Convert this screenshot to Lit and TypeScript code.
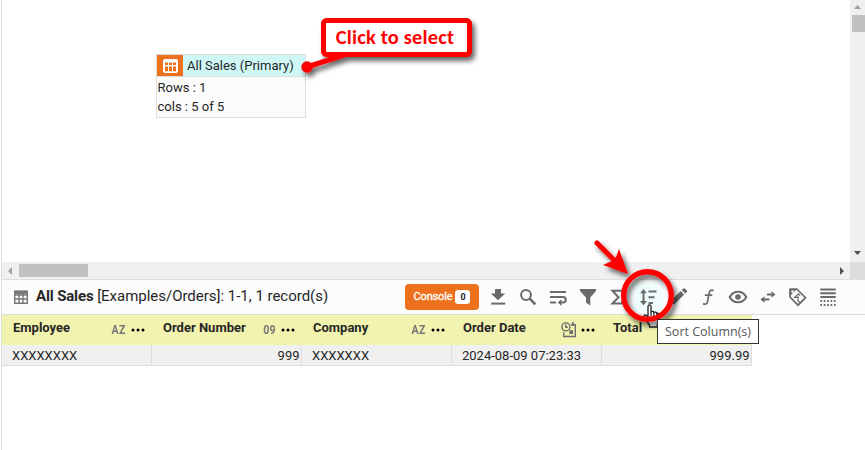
import { LitElement, html, svg, css, nothing } from "lit";
import { customElement } from "lit/decorators.js";
import { classMap } from "lit/directives/class-map.js";

const ICONS = [
  // download
  svg`<path d="M9 4h6v4.500h4.200L12 15.300 4.800 8.500H9z" fill="currentColor"/><path d="M5.200 17.600h14v2h-14z" fill="currentColor"/>`,
  // search
  svg`<circle cx="10" cy="10" r="4.900" class="line"/><path d="M13.700 13.700l5.600 5.600" class="line heavy"/>`,
  // wrap
  svg`<path d="M4 6.900h16M4 12h13a2.800 2.800 0 0 1 0 5.600h-3.500M4 17.600h6" class="line"/><path d="M15.500 14.300v6.600l-3.700-3.300z" fill="currentColor"/>`,
  // filter
  svg`<path d="M4 4h16v1.900L14.300 12.500V20.600L10 17.600V12.500L4 5.900z" fill="currentColor"/>`,
  // sum
  svg`<path d="M16 8V5.700H6.500l6 6.500-6 6.300H16V16" class="line"/>`,
  // sort
  svg`<path d="M7.500 6v12.500M12.500 6.500h8M12.500 12.300h6M12.500 17.900h4.500" class="line"/><path d="M4 8.300L7.500 4 11 8.300zM4 15.900L7.500 20.200l3.500-4.300z" fill="currentColor"/>`,
  // edit
  svg`<path d="M5 15.800L14.700 6.100l3.500 3.500L8.500 19.300H5zM15.700 5.100l1.700-1.700q.7-.5 1.300 0l2.200 2.200q.6.700 0 1.300l-1.700 1.700z" fill="currentColor"/>`,
  // function
  svg`<path d="M17.600 5.600c-2.300-1-3.800-.3-4.300 2L11.400 17c-.5 2.200-2 2.700-4.500 1.700M8.800 10.200h7.500" class="line thin"/>`,
  // view
  svg`<path d="M3.700 12C7.500 4.900 16.500 4.900 20.300 12 16.500 19.100 7.500 19.100 3.700 12z" class="line"/><circle cx="12" cy="12" r="2.800" fill="currentColor"/>`,
  // swap
  svg`<path d="M11 9.500h5M8 14.500h5.500" class="line"/><path d="M15.500 6.200l4 3.300-4 3.300zM8.500 11.200l-4 3.300 4 3.300z" fill="currentColor"/>`,
  // tag with sigma
  svg`<path d="M4 4.500q0-.5.500-.5h6.300l8.700 8.700-7.500 7.500L4 12z" class="line thin"/><path d="M3.500 4h7.500L4 11z" fill="currentColor"/><circle cx="6.600" cy="6.600" r="1.300" fill="#fcfcfc"/><path d="M14.600 11.700l-1.800-1.800-3.600 3.600 3.500-.3-.3 3.500 1.800 1.800" class="line hair" transform="translate(-.5 -1)"/>`,
  // rows
  svg`<path d="M4.300 4.500h15.500M4.300 8.200h15.500M4.300 12h15.500" class="line"/><path d="M4.300 16h15.500M4.300 20h15.500" class="line dots"/>`,
];

const COLUMNS = [
  { name: "Employee", kind: "AZ", value: "XXXXXXXX", right: false },
  { name: "Order Number", kind: "09", value: "999", right: true },
  { name: "Company", kind: "AZ", value: "XXXXXXX", right: false },
  { name: "Order Date", kind: "date", value: "2024-08-09 07:23:33", right: false },
  { name: "Total", kind: "", value: "999.99", right: true },
];

const dateIcon = svg`<g fill="none" stroke="#6e6e6e" stroke-width="1.400"><path d="M9.800 2.700h4.500v11.800H2.700V10.300"/><circle cx="4.900" cy="4.900" r="4"/><path d="M4.800 2.500v2.700h2"/></g><path d="M8.300 8.200h3.800v3.800H8.300zM11 0h1.700v4H11z" fill="#6e6e6e"/>`;

@customElement("app-root")
class AppRoot extends LitElement {
  static styles = css`
    :host { display: block; position: relative; width: 865px; height: 450px; overflow: hidden; background: #fff; color: #262626; font: 13px/19px Roboto, sans-serif; }
    * { box-sizing: border-box; }
    svg { display: block; flex: none; }
    .page { height: 450px; margin-left: 1px; border-left: 1px solid #ddd; display: flex; flex-direction: column; }
    .top { display: grid; grid-template: 262px 17px / 1fr 15px; border-bottom: 1px solid #ddd; height: 280px; flex: none; }
    .canvas { position: relative; overflow: hidden; }
    .card { position: absolute; left: 154px; top: 54px; width: 150px; height: 64px; border: 1px solid #ddd; background: #fcfcfc; }
    .cardhead { display: flex; align-items: center; height: 22px; background: #cff7f6; border-bottom: 1px solid #ddd; }
    .badge { width: 26px; height: 21px; background: #ed711c; margin-right: 4px; display: grid; place-items: center; }
    .info { padding: 1px 0 0 .5px; }
    .vbar { background: #f0f0f0; display: flex; flex-direction: column; align-items: center; padding: 5px 0 6px; }
    .vthumb { width: 13px; height: 17px; background: #c1c1c1; margin: 5px 0 auto 2px; }
    .hbar { background: #f0f0f0; display: flex; align-items: center; padding: 0 6px; }
    .hthumb { width: 69px; height: 13px; background: #c1c1c1; margin: 0 auto 0 7px; }
    .corner { background: #dcdcdc; }
    .toolbar { height: 35px; flex: none; display: flex; align-items: center; background: #fcfcfc; border-bottom: 1px solid #ddd; padding: 0 22px 1px 12px; }
    .title { font-size: 15px; letter-spacing: -.02px; margin-left: 8px; margin-right: auto; white-space: nowrap; }
    b { font-weight: 700; letter-spacing: -.15px; }
    .console { width: 74px; height: 26px; border-radius: 4px; background: #ed711c; color: #fff; font-size: 11px; letter-spacing: -.15px; -webkit-text-stroke: .3px #fff; display: flex; align-items: center; justify-content: center; gap: 3px; margin-right: 4px; }
    .count { width: 15px; height: 14px; border-radius: 3px; background: #fff; color: #222; font: 700 9px/14px Roboto, sans-serif; text-align: center; -webkit-text-stroke: 0; }
    .tool { width: 30px; height: 28px; display: grid; place-items: center; color: #6a6a6a; }
    .tool.on { background: #effcfc; }
    .line { fill: none; stroke: currentColor; stroke-width: 2; }
    .heavy { stroke-width: 2.600; }
    .thin { stroke-width: 1.700; }
    .hair { stroke-width: 1.200; }
    .dots { stroke-dasharray: 1.700 1.700; }
    .grid { display: grid; grid-template: 30px 21px / repeat(5, 150px); width: 750px; }
    .head { background: #f2f3ae; font-weight: 700; display: flex; align-items: center; padding: 0 7px 5px 11px; }
    .head .name { margin-right: auto; }
    .kind { color: #777; font: 700 12.500px/14px Roboto, sans-serif; letter-spacing: .3px; transform: scaleX(.85); transform-origin: right; margin-right: 5px; padding-top: 4px; }
    .date { margin-right: 4px; margin-top: 4px; }
    .more { margin-top: 4px; }
    .cell { background: #f0f0f0; border: solid #ddd; border-width: 0 1px 1px 0; line-height: 21px; padding: 0 1.500px 0 10px; white-space: nowrap; }
    .cell.right { text-align: right; }
    .marks { position: absolute; left: 0; top: 0; }
    .callout { position: absolute; left: 321px; top: 18px; width: 151px; height: 39px; border: 5px solid #f00; border-radius: 6px; background: #fff; color: #f00; font: 700 20.500px/29px Carlito, "Open Sans", sans-serif; letter-spacing: .15px; padding-right: 3px; text-align: center; white-space: nowrap; }
    .tip { position: absolute; left: 657px; top: 319px; width: 102px; height: 25px; border: 1px solid #333; background: #fff; color: #575757; font: 12.500px/23px "Open Sans", sans-serif; text-align: center; white-space: nowrap; }
  `;

  render() {
    return html`
      <div class="page">
        <div class="top">
          <div class="canvas">
            <div class="card">
              <div class="cardhead">
                <span class="badge"><svg width="15" height="14" viewBox="0 0 15 14"><rect width="15" height="14" rx="2" fill="#fff"/><path d="M2 3.500h3V6H2zM6 3.500h3V6H6zM10 3.500h3V6h-3zM2 7.500h3v4.800H2zM6 7.500h3v4.800H6zM10 7.500h3v4.800h-3z" fill="#ed711c"/></svg></span>
                All Sales (Primary)
              </div>
              <div class="info">Rows : 1<br />cols : 5 of 5</div>
            </div>
          </div>
          <div class="vbar">
            <svg width="7" height="5"><path d="M0 4L3.500 0 7 4z" fill="#a0a0a0"/></svg>
            <div class="vthumb"></div>
            <svg width="7" height="5"><path d="M0 0h7L3.500 4z" fill="#505050"/></svg>
          </div>
          <div class="hbar">
            <svg width="4" height="8"><path d="M4 0v8L0 4z" fill="#a0a0a0"/></svg>
            <div class="hthumb"></div>
            <svg width="4" height="8"><path d="M0 0l4 4-4 4z" fill="#505050"/></svg>
          </div>
          <div class="corner"></div>
        </div>
        <div class="toolbar">
          <svg width="14" height="14" viewBox="0 0 14 14"><path d="M.7 1.500h12.600v11.800H.7zM.7 5h12.600M.7 9h12.600M5 4v9M9 4v9" fill="none" stroke="#777" stroke-width="1.400"/><path d="M0 .5h14V4H0z" fill="#777"/></svg>
          <div class="title"><b>All Sales</b> [Examples/Orders]: 1-1, 1 record(s)</div>
          <div class="console">Console<span class="count">0</span></div>
          ${ICONS.map((icon, i) => html`<span class=${classMap({ tool: true, on: i === 5 })}><svg width="22" height="22" viewBox="1 1 22 22">${icon}</svg></span>`)}
        </div>
        <div class="grid">
          ${COLUMNS.map((c) => html`<div class="head"><span class="name">${c.name}</span>
            ${c.kind === "date"
              ? html`<svg class="date" width="16" height="16">${dateIcon}</svg>`
              : c.kind ? html`<span class="kind">${c.kind}</span>` : nothing}
            ${c.kind ? html`<svg class="more" width="14" height="4"><circle cx="2" cy="2" r="1.500"/><circle cx="7" cy="2" r="1.500"/><circle cx="12" cy="2" r="1.500"/></svg>` : nothing}</div>`)}
          ${COLUMNS.map((c) => html`<div class=${classMap({ cell: true, right: c.right })}>${c.value}</div>`)}
        </div>
      </div>
      <svg class="marks" width="865" height="450">
        <defs><filter id="s" x="-30%" y="-30%" width="170%" height="170%"><feDropShadow dx="3" dy="4" stdDeviation="2.500" flood-color="#000" flood-opacity=".6"/></filter></defs>
        <g filter="url(#s)">
          <path d="M307 67L350 53" stroke="#f00" stroke-width="5"/><circle cx="307" cy="67" r="5.700" fill="#f00"/>
          <rect x="321" y="18" width="151" height="39" rx="6" fill="#f00"/>
        </g>
        <path d="M649.500 327v-2l-5-7c-1.500-2.500 0-4 2-2.500l1.500 1.500v-10.500c0-2.300 3-2.300 3 0v5.500c.8-1 2.700-.8 2.900.5 1-.8 2.600-.4 2.800.8 1.200-.5 2.500.2 2.500 1.500v5l-2 5v2.200z" fill="#fff" stroke="#222" stroke-width="1.300" stroke-linejoin="round"/>
        <path d="M651 312v4M653.900 312.500v3.500M656.700 313.500v3" stroke="#222" stroke-width="1.200"/>
        <g filter="url(#s)">
          <circle cx="647.500" cy="295.500" r="23.800" fill="none" stroke="#f00" stroke-width="5.400"/>
          <path d="M597 243l17 17" stroke="#f00" stroke-width="5" stroke-linecap="round"/><path d="M619 249l9 25-25-9 9-4 4-4z" fill="#f00"/>
        </g>
      </svg>
      <div class="callout">Click to select</div>
      <div class="tip">Sort Column(s)</div>
    `;
  }
}
